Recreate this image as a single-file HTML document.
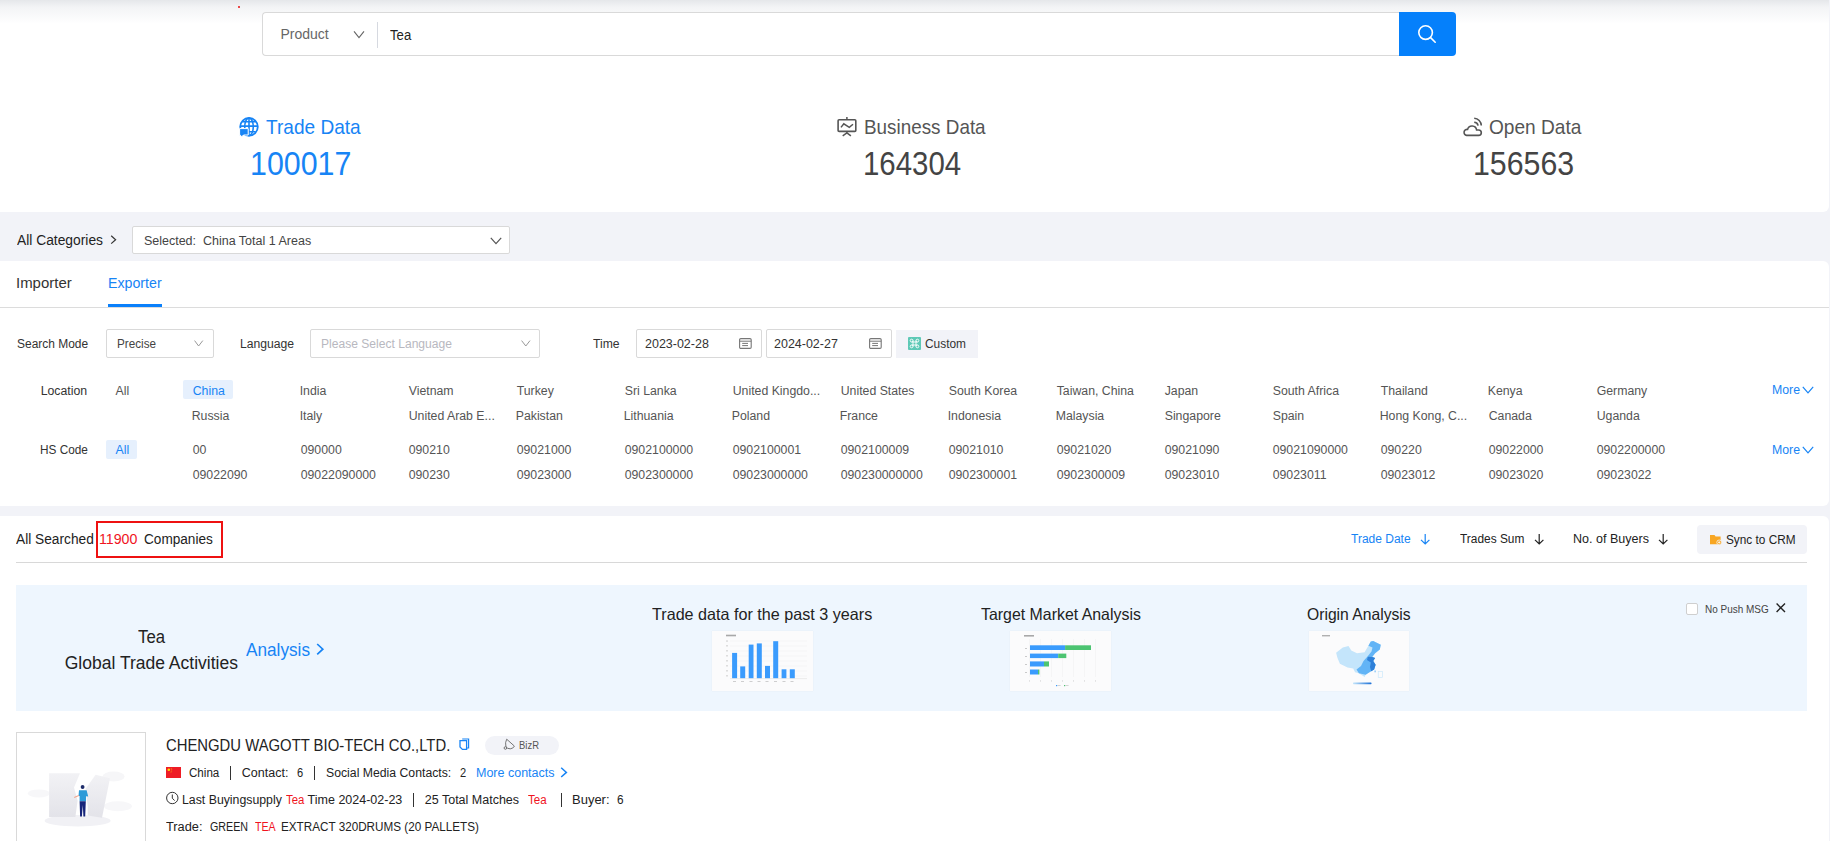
<!DOCTYPE html>
<html><head><meta charset="utf-8">
<style>
*{box-sizing:border-box;margin:0;padding:0}
html,body{width:1830px;height:841px;overflow:hidden}
body{background:#f2f3f8;font-family:"Liberation Sans",sans-serif;color:#222;position:relative}
.a{position:absolute}
.t{position:absolute;white-space:nowrap;transform-origin:0 0}
.card{position:absolute;left:0;width:1829px;background:#fff;border-radius:0 6px 6px 0}
.sel{position:absolute;border:1px solid #d9d9d9;border-radius:2px;background:#fff}
svg{position:absolute;overflow:visible}
</style></head>
<body>
<!-- ===== top card ===== -->
<div class="card" style="top:0;height:212px"></div>
<div class="a" style="left:0;top:0;width:1829px;height:24px;background:linear-gradient(#e5e7ea,#f3f4f6 30%,rgba(255,255,255,0))"></div>
<div class="a" style="left:238px;top:6px;width:2px;height:2px;background:#e81010;border-radius:1px"></div>
<!-- search box -->
<div class="a" style="left:262px;top:12px;width:1138px;height:44px;border:1px solid #d9d9d9;border-right:none;border-radius:4px 0 0 4px;background:#fff"></div>
<svg style="left:353px;top:30px" width="12" height="9" viewBox="0 0 12 9"><path d="M1 1.3 L6 7.6 L11 1.3" fill="none" stroke="#666" stroke-width="1.1"/></svg>
<div class="a" style="left:377px;top:22px;width:1px;height:26px;background:#d6d9e0"></div>
<div class="a" style="left:1399px;top:12px;width:57px;height:44px;background:#0580fb;border-radius:0 4px 4px 0"></div>
<svg style="left:1417px;top:24px" width="20" height="20" viewBox="0 0 20 20"><circle cx="8.6" cy="8.6" r="6.8" fill="none" stroke="#fff" stroke-width="1.6"/><path d="M13.6 13.6 L18.2 18.2" stroke="#fff" stroke-width="1.6" stroke-linecap="round"/></svg>
<!-- stat icons -->
<svg style="left:234px;top:112px" width="30" height="30" viewBox="0 0 30 30">
  <circle cx="15" cy="14.8" r="8.8" fill="none" stroke="#1784f5" stroke-width="1.8"/>
  <ellipse cx="15" cy="14.8" rx="4.3" ry="8.8" fill="none" stroke="#1784f5" stroke-width="1.6"/>
  <path d="M15 6 V23.6 M6.2 14.1 H23.8 M8.4 9.8 H21.6 M15.5 19.8 H21.6" stroke="#1784f5" stroke-width="1.6"/>
  <path d="M5.6 16.6 H14.2 V23 H9.5 L7.5 25 L6.6 23.3 H5.6 Z" fill="#1784f5" stroke="#fff" stroke-width="1"/>
</svg>
<svg style="left:832px;top:112px" width="30" height="30" viewBox="0 0 30 30">
  <rect x="6.1" y="7.8" width="17.7" height="11.6" rx="1" fill="none" stroke="#555" stroke-width="1.6"/>
  <path d="M14.9 5 V7.8 M9 15.4 L11.8 11.8 L17.3 15.4 L21 12.3 M14.9 19.5 V20.8 L10.7 23.8 M14.9 20.8 L18.9 23.8" fill="none" stroke="#555" stroke-width="1.5"/>
</svg>
<svg style="left:1458px;top:112px" width="30" height="30" viewBox="0 0 30 30">
  <path d="M8.6 23.4 H20.6 A2.7 2.7 0 0 0 20.6 18 H18.6 A4.6 4.6 0 0 0 9.6 17.4 A3 3 0 0 0 8.6 23.4 Z" fill="none" stroke="#555" stroke-width="1.6"/>
  <path d="M16.2 10.2 A4.2 4.2 0 0 1 20.1 13.6 M16.2 6.2 A7.6 7.6 0 0 1 23.3 13.6" fill="none" stroke="#555" stroke-width="1.6"/>
</svg>

<!-- ===== categories ===== -->
<svg style="left:110px;top:235px" width="7" height="10" viewBox="0 0 7 10"><path d="M1.2 0.8 L5.6 4.7 L1.2 8.6" fill="none" stroke="#333" stroke-width="1.2"/></svg>
<div class="sel" style="left:132px;top:226px;width:378px;height:28px;border-color:#d9d9d9"></div>
<svg style="left:490px;top:237px" width="12" height="8" viewBox="0 0 12 8"><path d="M0.8 0.8 L6 6.6 L11.2 0.8" fill="none" stroke="#555" stroke-width="1.2"/></svg>

<!-- ===== filter card ===== -->
<div class="card" style="top:261px;height:245px"></div>
<div class="a" style="left:108px;top:304px;width:54px;height:3px;background:#0a80fb"></div>
<div class="a" style="left:0;top:307px;width:1829px;height:1px;background:#dcdcdc"></div>
<!-- search row -->
<div class="sel" style="left:106px;top:329px;width:108px;height:29px"></div>
<svg style="left:194px;top:340px" width="10" height="7" viewBox="0 0 10 7"><path d="M0.6 0.6 L4.6 6 L8.8 0.6" fill="none" stroke="#999" stroke-width="1"/></svg>
<div class="sel" style="left:310px;top:329px;width:230px;height:29px"></div>
<svg style="left:521px;top:340px" width="10" height="7" viewBox="0 0 10 7"><path d="M0.6 0.6 L4.8 6 L9 0.6" fill="none" stroke="#999" stroke-width="1"/></svg>
<div class="sel" style="left:636px;top:329px;width:126px;height:29px"></div>
<div class="sel" style="left:766px;top:329px;width:126px;height:29px"></div>
<svg style="left:739px;top:338px" width="13" height="11" viewBox="0 0 13 11"><rect x="0.6" y="0.6" width="11.6" height="9.8" rx="1.2" fill="none" stroke="#777" stroke-width="1.1"/><path d="M0.6 3.2 H12.2 M3.2 5.4 H9 M3.2 7.6 H9" stroke="#777" stroke-width="1"/></svg>
<svg style="left:869px;top:338px" width="13" height="11" viewBox="0 0 13 11"><rect x="0.6" y="0.6" width="11.6" height="9.8" rx="1.2" fill="none" stroke="#777" stroke-width="1.1"/><path d="M0.6 3.2 H12.2 M3.2 5.4 H9 M3.2 7.6 H9" stroke="#777" stroke-width="1"/></svg>
<div class="a" style="left:896px;top:330px;width:82px;height:28px;background:#f2f3f8"></div>
<div class="a" style="left:908px;top:337px;width:13px;height:13px;background:#5ec9b6;border-radius:1px"></div>
<svg style="left:908px;top:337px" width="13" height="13" viewBox="0 0 13 13"><g fill="none" stroke="#fff" stroke-width="0.9"><circle cx="3.6" cy="3.6" r="1.4"/><circle cx="9.4" cy="3.6" r="1.4"/><circle cx="3.6" cy="9.4" r="1.4"/><circle cx="9.4" cy="9.4" r="1.4"/><path d="M3.6 5 H9.4 M3.6 8 H9.4 M5 3.6 V9.4 M8 3.6 V9.4"/></g></svg>
<!-- location highlight -->
<div class="a" style="left:183px;top:380px;width:50px;height:19px;background:#e6f0fd;border-radius:2px"></div>
<div class="a" style="left:106px;top:440px;width:31px;height:19px;background:#e6f0fd;border-radius:2px"></div>
<svg style="left:1802px;top:386px" width="12" height="8" viewBox="0 0 12 8"><path d="M0.8 0.8 L6 6.8 L11.2 0.8" fill="none" stroke="#1784f5" stroke-width="1.2"/></svg>
<svg style="left:1802px;top:446px" width="12" height="8" viewBox="0 0 12 8"><path d="M0.8 0.8 L6 6.8 L11.2 0.8" fill="none" stroke="#1784f5" stroke-width="1.2"/></svg>

<!-- ===== results card ===== -->
<div class="card" style="top:516px;height:340px"></div>
<div class="a" style="left:96px;top:521px;width:127px;height:37px;border:2px solid #ee1111"></div>
<div class="a" style="left:16px;top:562px;width:1791px;height:1px;background:#d8d8d8"></div>
<svg style="left:1420px;top:534px" width="11" height="11" viewBox="0 0 11 11"><path d="M5.2 0 V10 M1 5.8 L5.2 10 L9.4 5.8" fill="none" stroke="#1784f5" stroke-width="1.2"/></svg>
<svg style="left:1534px;top:534px" width="11" height="11" viewBox="0 0 11 11"><path d="M5.2 0 V10 M1 5.8 L5.2 10 L9.4 5.8" fill="none" stroke="#222" stroke-width="1.2"/></svg>
<svg style="left:1658px;top:534px" width="11" height="11" viewBox="0 0 11 11"><path d="M5.2 0 V10 M1 5.8 L5.2 10 L9.4 5.8" fill="none" stroke="#222" stroke-width="1.2"/></svg>
<div class="a" style="left:1697px;top:525px;width:110px;height:29px;background:#f2f3f8;border-radius:4px"></div>
<svg style="left:1710px;top:535px" width="12" height="10" viewBox="0 0 12 10"><path d="M0 0 H4.5 L5.6 1.4 H10.6 V9.2 H0 Z" fill="#f8a623"/><circle cx="9.2" cy="7.4" r="2.4" fill="#f8a623" stroke="#f2f3f8" stroke-width="0.8"/><path d="M8 7.4 H10.4 M9.2 6.2 V8.6" stroke="#fff" stroke-width="0.8"/></svg>

<!-- ===== banner ===== -->
<div class="a" style="left:16px;top:585px;width:1791px;height:126px;background:#eef6fe"></div>
<svg style="left:316px;top:643px" width="9" height="13" viewBox="0 0 9 13"><path d="M1.2 1 L6.8 6.2 L1.2 11.4" fill="none" stroke="#1784f5" stroke-width="1.7"/></svg>
<!-- thumb 1 -->
<div class="a" style="left:712px;top:631px;width:101px;height:60px;background:#fbfbfc;box-shadow:0 0 1px rgba(0,0,0,0.08)"></div>
<svg style="left:712px;top:631px" width="101" height="60" viewBox="0 0 101 60">
  <rect x="14" y="3.7" width="10" height="1.6" fill="#555" opacity="0.5"/>
  <g stroke="#eee" stroke-width="0.4"><path d="M18 10 H95 M18 15 H95 M18 20 H95 M18 25 H95 M18 30 H95 M18 35 H95 M18 40 H95 M18 45 H95"/></g>
  <g fill="#3a9bfd">
    <rect x="20.1" y="21.9" width="5" height="25.4"/>
    <rect x="28.2" y="35.4" width="5" height="11.9"/>
    <rect x="36.7" y="13.6" width="4.8" height="33.7"/>
    <rect x="44.8" y="12.4" width="5" height="34.9"/>
    <rect x="53" y="34.9" width="5" height="12.4"/>
    <rect x="61.2" y="10.2" width="5" height="37.1"/>
    <rect x="69.6" y="38.3" width="4.8" height="9"/>
    <rect x="77.8" y="38.3" width="5" height="9"/>
  </g>
  <path d="M18 47.6 H95" stroke="#ddd" stroke-width="0.5"/><g fill="#999" opacity="0.5"><rect x="14" y="9.6" width="2" height="0.9"/><rect x="14" y="14.4" width="2" height="0.9"/><rect x="14" y="19.4" width="2" height="0.9"/><rect x="14" y="24.4" width="2" height="0.9"/><rect x="14" y="29.4" width="2" height="0.9"/><rect x="14" y="34.4" width="2" height="0.9"/><rect x="14" y="39.4" width="2" height="0.9"/><rect x="14" y="44.4" width="2" height="0.9"/><rect x="21" y="50" width="3" height="0.9"/><rect x="29" y="50" width="3" height="0.9"/><rect x="37.5" y="50" width="3" height="0.9"/><rect x="45.5" y="50" width="3" height="0.9"/><rect x="53.5" y="50" width="3" height="0.9"/><rect x="62" y="50" width="3" height="0.9"/><rect x="70.5" y="50" width="3" height="0.9"/><rect x="78.5" y="50" width="3" height="0.9"/></g>
</svg>
<!-- thumb 2 -->
<div class="a" style="left:1010px;top:631px;width:101px;height:60px;background:#fbfbfc;box-shadow:0 0 1px rgba(0,0,0,0.08)"></div>
<svg style="left:1010px;top:631px" width="101" height="60" viewBox="0 0 101 60">
  <rect x="14" y="4" width="10" height="1.6" fill="#555" opacity="0.5"/>
  <g stroke="#eee" stroke-width="0.4"><path d="M19.5 8 V46 M30.5 8 V46 M41.5 8 V46 M52.5 8 V46 M63.5 8 V46 M74.5 8 V46 M85.5 8 V46"/></g>
  <g fill="#3a9bfd"><rect x="20" y="14.3" width="35.1" height="4.7"/><rect x="20" y="22.6" width="28.2" height="4.5"/><rect x="20" y="30.4" width="14" height="5.1"/><rect x="20" y="38.5" width="8" height="5"/></g>
  <g fill="#4dc472"><rect x="55.1" y="14.3" width="25.9" height="4.7"/><rect x="48.2" y="22.6" width="8.1" height="4.5"/><rect x="34" y="30.4" width="5" height="5.1"/><rect x="28" y="38.5" width="1.4" height="5"/></g>
  <rect x="46" y="54" width="1.2" height="1.2" fill="#3a9bfd"/><rect x="47.6" y="54.2" width="3" height="0.8" fill="#aaa" opacity="0.6"/><rect x="54" y="54" width="1.2" height="1.2" fill="#4dc472"/><rect x="55.6" y="54.2" width="3" height="0.8" fill="#aaa" opacity="0.6"/><g fill="#999" opacity="0.5"><rect x="15" y="17" width="2" height="1"/><rect x="15" y="25" width="2" height="1"/><rect x="15" y="33" width="2" height="1"/><rect x="15" y="41" width="2" height="1"/><rect x="19" y="49.5" width="1" height="0.9"/><rect x="30" y="49.5" width="1" height="0.9"/><rect x="41" y="49.5" width="1" height="0.9"/><rect x="52" y="49.5" width="1" height="0.9"/><rect x="63" y="49.5" width="1" height="0.9"/><rect x="74" y="49.5" width="1" height="0.9"/><rect x="85" y="49.5" width="1" height="0.9"/></g>
</svg>
<!-- thumb 3 -->
<div class="a" style="left:1309px;top:631px;width:100px;height:60px;background:#fbfbfc;box-shadow:0 0 1px rgba(0,0,0,0.08)"></div>
<svg style="left:1309px;top:631px" width="100" height="60" viewBox="0 0 100 60">
  <rect x="13" y="4" width="8" height="1.4" fill="#555" opacity="0.45"/>
  <path d="M27.1 21.8 L33.8 16.6 L39.5 15.1 L42.3 19.4 L48 22.3 L55.6 21.3 L59.4 14.7 L61.8 10.4 L64.2 9.9 L71.8 13.7 L70.8 18.5 L66.1 22.3 L63.2 26.1 L66.1 27 L64.2 29.9 L66.6 33.7 L65.1 38.4 L61.3 40.8 L56.6 43.7 L55.6 46 L49.9 42.2 L46.1 41.3 L44.2 37.5 L38.5 36.5 L30.9 32.7 L28.5 27 Z" fill="#c4e5fb"/>
  <path d="M59.4 14.7 L61.8 10.4 L64.2 9.9 L71.8 13.7 L70.8 18.5 L66.1 22.3 L63.2 26.1 L66.1 27 L64.2 29.9 L66.6 33.7 L65.1 38.4 L61.3 40.8 L56.6 43.7 L49.9 42.2 L47.5 38.5 L52 35 L54.5 30 L58.5 25.5 L62.5 20.5 L63.5 16.5 Z" fill="#62b4f6"/>
  <path d="M58.8 25.8 L63.2 26.1 L66.1 27 L64.2 29.9 L66.6 33.7 L65.1 38.4 L62.2 40.2 L61 36 L61.8 31.5 L58 29 Z" fill="#2f80d8"/>
  <rect x="65.6" y="39.5" width="1" height="1.8" fill="#62b4f6"/>
  <rect x="69.2" y="40.6" width="4.2" height="6" fill="none" stroke="#c4e5fb" stroke-width="0.6"/>
  <defs><linearGradient id="lg" x1="0" x2="1"><stop offset="0" stop-color="#c4e5fb"/><stop offset="1" stop-color="#1a6fd6"/></linearGradient></defs>
  <rect x="44" y="51.6" width="18.5" height="1.6" rx="0.6" fill="url(#lg)"/>
</svg>
<div class="a" style="left:1686px;top:603px;width:12px;height:12px;border:1px solid #cfcfcf;background:#fff;border-radius:2px"></div>
<svg style="left:1776px;top:603px" width="10" height="10" viewBox="0 0 10 10"><path d="M0.6 0.6 L9 9 M9 0.6 L0.6 9" stroke="#222" stroke-width="1.4"/></svg>

<!-- ===== company ===== -->
<div class="a" style="left:16px;top:732px;width:130px;height:130px;border:1px solid #d9d9d9;background:#fff"></div>
<svg style="left:17px;top:733px" width="128" height="108" viewBox="0 0 128 108">
  <defs><linearGradient id="pg" x1="0" y1="0" x2="0" y2="1"><stop offset="0" stop-color="#f2f2f5"/><stop offset="1" stop-color="#e3e3e9"/></linearGradient></defs>
  <ellipse cx="21.8" cy="60.4" rx="11" ry="4" fill="#f7f7f9"/>
  <ellipse cx="96.6" cy="43.5" rx="11" ry="5" fill="#f6f6f8"/>
  <ellipse cx="100.9" cy="73.3" rx="14" ry="5" fill="#f7f7f9"/>
  <ellipse cx="60.6" cy="87.7" rx="33" ry="5.8" fill="#f1f1f5"/>
  <path d="M32.1 40.2 H63 L57 54.6 L60.6 67.5 L58.4 84 H32.1 Z" fill="url(#pg)"/>
  <path d="M78.6 41.7 L93 45.2 L85 84.8 L70.7 82.6 L70.7 73.3 L68.5 56 Z" fill="url(#pg)"/>
  <circle cx="65.6" cy="54" r="1.9" fill="#1f2d6b"/>
  <path d="M62 57.2 H69.6 L71.2 63.5 L69 63.2 V68.3 H62.6 V63 L61.5 63 Z" fill="#2d9bd8"/>
  <path d="M62.6 68.3 H68.8 L68.2 83.4 H66.4 L65.8 72 L64.9 83.4 H63.1 Z" fill="#17257a"/>
  <path d="M61.8 62.6 L57.2 64.6" stroke="#f2a58c" stroke-width="1.1"/>
</svg>
<svg style="left:459px;top:738px" width="11" height="12" viewBox="0 0 11 12"><path d="M3.2 1 H9.6 V10 H8" fill="none" stroke="#1784f5" stroke-width="1.2"/><path d="M1 2.6 H7.6 V11.4 H3.4 L1 9 Z" fill="#fff" stroke="#1784f5" stroke-width="1.3"/></svg>
<div class="a" style="left:485px;top:736px;width:74px;height:19px;background:#f2f3f8;border-radius:10px"></div>
<svg style="left:503px;top:738px" width="12" height="12" viewBox="0 0 12 12"><path d="M3.7 1.2 L11.4 8.1 A4.9 4.9 0 0 1 2.9 8.6 Q1.9 4.5 3.7 1.2 Z" fill="none" stroke="#666" stroke-width="0.9"/><circle cx="2.4" cy="10" r="1.3" fill="#f2f3f8" stroke="#666" stroke-width="0.9"/></svg>
<div class="a" style="left:166px;top:767px;width:15px;height:11px;background:#ee1c25"></div>
<svg style="left:166px;top:767px" width="15" height="11" viewBox="0 0 15 11"><circle cx="2.8" cy="2.8" r="1.3" fill="#ffde00"/><circle cx="5.2" cy="1.4" r="0.45" fill="#ffde00"/><circle cx="5.8" cy="2.6" r="0.45" fill="#ffde00"/><circle cx="5.7" cy="3.9" r="0.45" fill="#ffde00"/><circle cx="5" cy="5" r="0.45" fill="#ffde00"/></svg>
<div class="a" style="left:230px;top:766px;width:1px;height:14px;background:#333"></div>
<div class="a" style="left:314px;top:766px;width:1px;height:14px;background:#333"></div>
<svg style="left:560px;top:767px" width="8" height="11" viewBox="0 0 8 11"><path d="M1.2 0.8 L6.4 5.4 L1.2 10" fill="none" stroke="#1784f5" stroke-width="1.5"/></svg>
<svg style="left:166px;top:792px" width="13" height="13" viewBox="0 0 13 13"><circle cx="6.3" cy="6" r="5.7" fill="none" stroke="#333" stroke-width="1"/><path d="M6.3 2.5 V6.2 L8.6 8.6" fill="none" stroke="#333" stroke-width="1"/></svg>
<div class="a" style="left:413px;top:793px;width:1px;height:14px;background:#333"></div>
<div class="a" style="left:561px;top:793px;width:1px;height:14px;background:#333"></div>

<div class="t" style="left:280.50px;top:26.20px;font-size:14px;line-height:17px;color:#666;">Product</div>
<div class="t" style="left:390.00px;top:27.00px;font-size:14px;line-height:17px;color:#222;transform:scaleX(0.9392);">Tea</div>
<div class="t" style="left:266.00px;top:114.20px;font-size:21px;line-height:25px;color:#1784f5;transform:scaleX(0.9083);">Trade Data</div>
<div class="t" style="left:863.50px;top:113.90px;font-size:21px;line-height:25px;color:#555;transform:scaleX(0.8981);">Business Data</div>
<div class="t" style="left:1489.29px;top:114.20px;font-size:21px;line-height:25px;color:#555;transform:scaleX(0.9099);">Open Data</div>
<div class="t" style="left:249.86px;top:144.00px;font-size:33px;line-height:40px;color:#1784f5;transform:scaleX(0.9207);">100017</div>
<div class="t" style="left:862.62px;top:143.80px;font-size:33px;line-height:40px;color:#444;transform:scaleX(0.8918);">164304</div>
<div class="t" style="left:1472.56px;top:143.90px;font-size:33px;line-height:40px;color:#444;transform:scaleX(0.9188);">156563</div>
<div class="t" style="left:17.20px;top:232.00px;font-size:14px;line-height:17px;color:#222;transform:scaleX(0.9868);">All Categories</div>
<div class="t" style="left:143.90px;top:234.00px;font-size:12.5px;line-height:15px;color:#444;">Selected:  China Total 1 Areas</div>
<div class="t" style="left:15.53px;top:275.00px;font-size:14px;line-height:17px;color:#333;transform:scaleX(1.0688);">Importer</div>
<div class="t" style="left:107.59px;top:275.00px;font-size:14px;line-height:17px;color:#1784f5;transform:scaleX(1.0144);">Exporter</div>
<div class="t" style="left:17.40px;top:337.00px;font-size:12.3px;line-height:15px;color:#333;transform:scaleX(0.9727);">Search Mode</div>
<div class="t" style="left:117.25px;top:337.00px;font-size:12.3px;line-height:15px;color:#444;transform:scaleX(0.9511);">Precise</div>
<div class="t" style="left:240.11px;top:337.00px;font-size:12.3px;line-height:15px;color:#333;transform:scaleX(0.9894);">Language</div>
<div class="t" style="left:321.32px;top:337.00px;font-size:12.3px;line-height:15px;color:#b8b8c0;transform:scaleX(0.9820);">Please Select Language</div>
<div class="t" style="left:593.30px;top:337.00px;font-size:12.3px;line-height:15px;color:#333;transform:scaleX(0.9878);">Time</div>
<div class="t" style="left:644.60px;top:337.00px;font-size:12.3px;line-height:15px;color:#333;transform:scaleX(1.0149);">2023-02-28</div>
<div class="t" style="left:774.40px;top:337.00px;font-size:12.3px;line-height:15px;color:#333;transform:scaleX(1.0149);">2024-02-27</div>
<div class="t" style="left:924.90px;top:337.00px;font-size:12.3px;line-height:15px;color:#333;transform:scaleX(0.9662);">Custom</div>
<div class="t" style="left:40.70px;top:383.50px;font-size:12.3px;line-height:15px;color:#333;">Location</div>
<div class="t" style="left:115.50px;top:383.50px;font-size:12.3px;line-height:15px;color:#555;">All</div>
<div class="t" style="left:39.64px;top:443.00px;font-size:12.3px;line-height:15px;color:#333;transform:scaleX(0.9601);">HS Code</div>
<div class="t" style="left:115.50px;top:443.00px;font-size:12.3px;line-height:15px;color:#1784f5;">All</div>
<div class="t" style="left:192.70px;top:383.50px;font-size:12.3px;line-height:15px;color:#1784f5;">China</div>
<div class="t" style="left:299.70px;top:383.50px;font-size:12.3px;line-height:15px;color:#555;">India</div>
<div class="t" style="left:408.70px;top:383.50px;font-size:12.3px;line-height:15px;color:#555;">Vietnam</div>
<div class="t" style="left:516.70px;top:383.50px;font-size:12.3px;line-height:15px;color:#555;">Turkey</div>
<div class="t" style="left:624.70px;top:383.50px;font-size:12.3px;line-height:15px;color:#555;">Sri Lanka</div>
<div class="t" style="left:732.70px;top:383.50px;font-size:12.3px;line-height:15px;color:#555;">United Kingdo...</div>
<div class="t" style="left:840.70px;top:383.50px;font-size:12.3px;line-height:15px;color:#555;">United States</div>
<div class="t" style="left:948.70px;top:383.50px;font-size:12.3px;line-height:15px;color:#555;">South Korea</div>
<div class="t" style="left:1056.70px;top:383.50px;font-size:12.3px;line-height:15px;color:#555;">Taiwan, China</div>
<div class="t" style="left:1164.70px;top:383.50px;font-size:12.3px;line-height:15px;color:#555;">Japan</div>
<div class="t" style="left:1272.70px;top:383.50px;font-size:12.3px;line-height:15px;color:#555;">South Africa</div>
<div class="t" style="left:1380.70px;top:383.50px;font-size:12.3px;line-height:15px;color:#555;">Thailand</div>
<div class="t" style="left:1487.70px;top:383.50px;font-size:12.3px;line-height:15px;color:#555;">Kenya</div>
<div class="t" style="left:1596.70px;top:383.50px;font-size:12.3px;line-height:15px;color:#555;">Germany</div>
<div class="t" style="left:191.70px;top:408.50px;font-size:12.3px;line-height:15px;color:#555;">Russia</div>
<div class="t" style="left:299.70px;top:408.50px;font-size:12.3px;line-height:15px;color:#555;">Italy</div>
<div class="t" style="left:408.70px;top:408.50px;font-size:12.3px;line-height:15px;color:#555;">United Arab E...</div>
<div class="t" style="left:515.70px;top:408.50px;font-size:12.3px;line-height:15px;color:#555;">Pakistan</div>
<div class="t" style="left:623.70px;top:408.50px;font-size:12.3px;line-height:15px;color:#555;">Lithuania</div>
<div class="t" style="left:731.70px;top:408.50px;font-size:12.3px;line-height:15px;color:#555;">Poland</div>
<div class="t" style="left:839.70px;top:408.50px;font-size:12.3px;line-height:15px;color:#555;">France</div>
<div class="t" style="left:947.70px;top:408.50px;font-size:12.3px;line-height:15px;color:#555;">Indonesia</div>
<div class="t" style="left:1055.70px;top:408.50px;font-size:12.3px;line-height:15px;color:#555;">Malaysia</div>
<div class="t" style="left:1164.70px;top:408.50px;font-size:12.3px;line-height:15px;color:#555;">Singapore</div>
<div class="t" style="left:1272.70px;top:408.50px;font-size:12.3px;line-height:15px;color:#555;">Spain</div>
<div class="t" style="left:1379.70px;top:408.50px;font-size:12.3px;line-height:15px;color:#555;">Hong Kong, C...</div>
<div class="t" style="left:1488.70px;top:408.50px;font-size:12.3px;line-height:15px;color:#555;">Canada</div>
<div class="t" style="left:1596.70px;top:408.50px;font-size:12.3px;line-height:15px;color:#555;">Uganda</div>
<div class="t" style="left:192.70px;top:443.00px;font-size:12.3px;line-height:15px;color:#555;">00</div>
<div class="t" style="left:300.70px;top:443.00px;font-size:12.3px;line-height:15px;color:#555;">090000</div>
<div class="t" style="left:408.70px;top:443.00px;font-size:12.3px;line-height:15px;color:#555;">090210</div>
<div class="t" style="left:516.70px;top:443.00px;font-size:12.3px;line-height:15px;color:#555;">09021000</div>
<div class="t" style="left:624.70px;top:443.00px;font-size:12.3px;line-height:15px;color:#555;">0902100000</div>
<div class="t" style="left:732.70px;top:443.00px;font-size:12.3px;line-height:15px;color:#555;">0902100001</div>
<div class="t" style="left:840.70px;top:443.00px;font-size:12.3px;line-height:15px;color:#555;">0902100009</div>
<div class="t" style="left:948.70px;top:443.00px;font-size:12.3px;line-height:15px;color:#555;">09021010</div>
<div class="t" style="left:1056.70px;top:443.00px;font-size:12.3px;line-height:15px;color:#555;">09021020</div>
<div class="t" style="left:1164.70px;top:443.00px;font-size:12.3px;line-height:15px;color:#555;">09021090</div>
<div class="t" style="left:1272.70px;top:443.00px;font-size:12.3px;line-height:15px;color:#555;">09021090000</div>
<div class="t" style="left:1380.70px;top:443.00px;font-size:12.3px;line-height:15px;color:#555;">090220</div>
<div class="t" style="left:1488.70px;top:443.00px;font-size:12.3px;line-height:15px;color:#555;">09022000</div>
<div class="t" style="left:1596.70px;top:443.00px;font-size:12.3px;line-height:15px;color:#555;">0902200000</div>
<div class="t" style="left:192.70px;top:468.00px;font-size:12.3px;line-height:15px;color:#555;">09022090</div>
<div class="t" style="left:300.70px;top:468.00px;font-size:12.3px;line-height:15px;color:#555;">09022090000</div>
<div class="t" style="left:408.70px;top:468.00px;font-size:12.3px;line-height:15px;color:#555;">090230</div>
<div class="t" style="left:516.70px;top:468.00px;font-size:12.3px;line-height:15px;color:#555;">09023000</div>
<div class="t" style="left:624.70px;top:468.00px;font-size:12.3px;line-height:15px;color:#555;">0902300000</div>
<div class="t" style="left:732.70px;top:468.00px;font-size:12.3px;line-height:15px;color:#555;">09023000000</div>
<div class="t" style="left:840.70px;top:468.00px;font-size:12.3px;line-height:15px;color:#555;">090230000000</div>
<div class="t" style="left:948.70px;top:468.00px;font-size:12.3px;line-height:15px;color:#555;">0902300001</div>
<div class="t" style="left:1056.70px;top:468.00px;font-size:12.3px;line-height:15px;color:#555;">0902300009</div>
<div class="t" style="left:1164.70px;top:468.00px;font-size:12.3px;line-height:15px;color:#555;">09023010</div>
<div class="t" style="left:1272.70px;top:468.00px;font-size:12.3px;line-height:15px;color:#555;">09023011</div>
<div class="t" style="left:1380.70px;top:468.00px;font-size:12.3px;line-height:15px;color:#555;">09023012</div>
<div class="t" style="left:1488.70px;top:468.00px;font-size:12.3px;line-height:15px;color:#555;">09023020</div>
<div class="t" style="left:1596.70px;top:468.00px;font-size:12.3px;line-height:15px;color:#555;">09023022</div>
<div class="t" style="left:1772.00px;top:383.40px;font-size:12.3px;line-height:15px;color:#1784f5;">More</div>
<div class="t" style="left:1772.00px;top:443.40px;font-size:12.3px;line-height:15px;color:#1784f5;">More</div>
<div class="t" style="left:16.25px;top:531.00px;font-size:14px;line-height:17px;color:#222;transform:scaleX(0.9797);">All Searched</div>
<div class="t" style="left:99.39px;top:531.00px;font-size:14px;line-height:17px;color:#f0141e;transform:scaleX(1.0133);">11900</div>
<div class="t" style="left:144.40px;top:531.00px;font-size:14px;line-height:17px;color:#222;transform:scaleX(0.9716);">Companies</div>
<div class="t" style="left:1351.40px;top:532.00px;font-size:12.3px;line-height:15px;color:#1784f5;transform:scaleX(0.9768);">Trade Date</div>
<div class="t" style="left:1460.20px;top:532.00px;font-size:12.3px;line-height:15px;color:#222;transform:scaleX(0.9672);">Trades Sum</div>
<div class="t" style="left:1572.68px;top:532.00px;font-size:12.3px;line-height:15px;color:#222;transform:scaleX(1.0198);">No. of Buyers</div>
<div class="t" style="left:1725.70px;top:532.50px;font-size:12.3px;line-height:15px;color:#222;transform:scaleX(0.9600);">Sync to CRM</div>
<div class="t" style="left:138.00px;top:626.80px;font-size:17.5px;line-height:21px;color:#222;transform:scaleX(0.9585);">Tea</div>
<div class="t" style="left:64.75px;top:652.80px;font-size:17.5px;line-height:21px;color:#222;">Global Trade Activities</div>
<div class="t" style="left:246.20px;top:639.00px;font-size:18.4px;line-height:22px;color:#1784f5;transform:scaleX(0.9343);">Analysis</div>
<div class="t" style="left:652.10px;top:604.00px;font-size:16.5px;line-height:20px;color:#222;transform:scaleX(0.9788);">Trade data for the past 3 years</div>
<div class="t" style="left:980.70px;top:604.00px;font-size:16.5px;line-height:20px;color:#222;transform:scaleX(0.9631);">Target Market Analysis</div>
<div class="t" style="left:1306.70px;top:604.00px;font-size:16.5px;line-height:20px;color:#222;transform:scaleX(0.9500);">Origin Analysis</div>
<div class="t" style="left:1704.80px;top:602.90px;font-size:11px;line-height:13px;color:#444;transform:scaleX(0.9061);">No Push MSG</div>
<div class="t" style="left:165.90px;top:735.00px;font-size:16.5px;line-height:20px;color:#222;transform:scaleX(0.8997);">CHENGDU WAGOTT BIO-TECH CO.,LTD.</div>
<div class="t" style="left:519.20px;top:739.00px;font-size:11px;line-height:13px;color:#555;transform:scaleX(0.8591);">BizR</div>
<div class="t" style="left:188.50px;top:766.00px;font-size:12.5px;line-height:15px;color:#222;transform:scaleX(0.9264);">China</div>
<div class="t" style="left:241.80px;top:766.00px;font-size:12.5px;line-height:15px;color:#222;">Contact:</div>
<div class="t" style="left:296.80px;top:766.00px;font-size:12.5px;line-height:15px;color:#222;transform:scaleX(0.8857);">6</div>
<div class="t" style="left:326.00px;top:766.00px;font-size:12.5px;line-height:15px;color:#222;transform:scaleX(0.9799);">Social Media Contacts:</div>
<div class="t" style="left:459.80px;top:766.00px;font-size:12.5px;line-height:15px;color:#222;transform:scaleX(0.8857);">2</div>
<div class="t" style="left:476.00px;top:766.00px;font-size:12.5px;line-height:15px;color:#1784f5;">More contacts</div>
<div class="t" style="left:181.82px;top:793.00px;font-size:12.5px;line-height:15px;color:#222;transform:scaleX(0.9842);">Last Buyingsupply</div>
<div class="t" style="left:285.60px;top:793.00px;font-size:12.5px;line-height:15px;color:#f0141e;transform:scaleX(0.9108);">Tea</div>
<div class="t" style="left:307.60px;top:793.00px;font-size:12.5px;line-height:15px;color:#222;">Time 2024-02-23</div>
<div class="t" style="left:424.80px;top:793.00px;font-size:12.5px;line-height:15px;color:#222;">25 Total Matches</div>
<div class="t" style="left:527.60px;top:793.00px;font-size:12.5px;line-height:15px;color:#f0141e;transform:scaleX(0.9257);">Tea</div>
<div class="t" style="left:572.36px;top:793.00px;font-size:12.5px;line-height:15px;color:#222;transform:scaleX(1.0388);">Buyer:</div>
<div class="t" style="left:617.40px;top:793.00px;font-size:12.5px;line-height:15px;color:#222;transform:scaleX(0.9429);">6</div>
<div class="t" style="left:166.00px;top:820.00px;font-size:12.5px;line-height:15px;color:#222;transform:scaleX(1.0230);">Trade:</div>
<div class="t" style="left:210.00px;top:820.00px;font-size:12.5px;line-height:15px;color:#222;transform:scaleX(0.8554);">GREEN</div>
<div class="t" style="left:254.60px;top:820.00px;font-size:12.5px;line-height:15px;color:#f0141e;transform:scaleX(0.8529);">TEA</div>
<div class="t" style="left:281.06px;top:820.00px;font-size:12.5px;line-height:15px;color:#222;transform:scaleX(0.9360);">EXTRACT 320DRUMS (20 PALLETS)</div>
</body></html>
